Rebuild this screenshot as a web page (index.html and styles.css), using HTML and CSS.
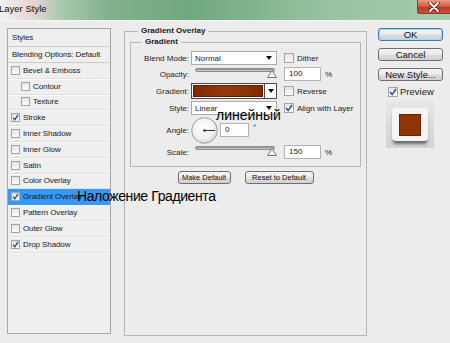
FILE: index.html
```html
<!DOCTYPE html>
<html lang="ru">
<head>
    <meta charset="UTF-8">
    <meta name="viewport" content="width=device-width, initial-scale=1.0">
    <title>Layer Style</title>
    <link rel="stylesheet" href="styles.css">
</head>
<body>
    <div class="window">
        <div class="titlebar">
            <span class="title">Layer Style</span>
            <span class="close">
                <svg width="12" height="10" viewBox="0 0 12 10"><path d="M2 1 L10 9 M10 1 L2 9" stroke="#4a1a12" stroke-width="3.4" stroke-linecap="round"/><path d="M2 1 L10 9 M10 1 L2 9" stroke="#fff" stroke-width="1.8" stroke-linecap="round"/></svg>
            </span>
        </div>

        <div class="content">
            <!-- left list of layer effects -->
            <div class="styles-panel">
                <div class="panel-head">Styles</div>
                <div class="panel-head blend">Blending Options: Default</div>
                <ul class="fx-list">
                    <li><span class="check"></span>Bevel &amp; Emboss</li>
                    <li class="sub"><span class="check"></span>Contour</li>
                    <li class="sub"><span class="check"></span>Texture</li>
                    <li><span class="check"><svg width="7" height="7" viewBox="0 0 7 7"><path d="M1 3.6 L2.8 5.8 L6 0.8" fill="none" stroke="#2b4d9e" stroke-width="1.4"/></svg></span>Stroke</li>
                    <li><span class="check"></span>Inner Shadow</li>
                    <li><span class="check"></span>Inner Glow</li>
                    <li><span class="check"></span>Satin</li>
                    <li><span class="check"></span>Color Overlay</li>
                    <li class="active"><span class="check"><svg width="7" height="7" viewBox="0 0 7 7"><path d="M1 3.6 L2.8 5.8 L6 0.8" fill="none" stroke="#2b4d9e" stroke-width="1.4"/></svg></span>Gradient Overlay</li>
                    <li><span class="check"></span>Pattern Overlay</li>
                    <li><span class="check"></span>Outer Glow</li>
                    <li><span class="check"><svg width="7" height="7" viewBox="0 0 7 7"><path d="M1 3.6 L2.8 5.8 L6 0.8" fill="none" stroke="#2b4d9e" stroke-width="1.4"/></svg></span>Drop Shadow</li>
                </ul>
            </div>

            <!-- main settings -->
            <fieldset class="group outer">
                <legend>Gradient Overlay</legend>
                <fieldset class="group inner">
                    <legend>Gradient</legend>
                    <div class="form-grid">
                        <label>Blend Mode:</label>
                        <div class="select"><span>Normal</span><span class="arrow"></span></div>
                        <div class="extra"><span class="check"></span>Dither</div>

                        <label>Opacity:</label>
                        <div class="slider">
                            <div class="track"></div>
                            <svg class="thumb" width="10" height="8" viewBox="0 0 10 8"><path d="M5 0.5 L9.5 7.5 L0.5 7.5 Z" fill="#f4f4f4" stroke="#7a7a7a"/></svg>
                        </div>
                        <div class="extra"><span class="num">100</span><span class="unit">%</span></div>

                        <label>Gradient:</label>
                        <div class="gradient-pick"><span class="swatch"></span><span class="drop"><span class="arrow"></span></span></div>
                        <div class="extra"><span class="check"></span>Reverse</div>

                        <label>Style:</label>
                        <div class="select"><span>Linear</span><span class="arrow"></span></div>
                        <div class="extra"><span class="check"><svg width="8" height="8" viewBox="0 0 8 8"><path d="M1 4 L3.2 6.6 L7 1" fill="none" stroke="#2b4d9e" stroke-width="1.5"/></svg></span>Align with Layer</div>

                        <label>Angle:</label>
                        <div class="angle">
                            <svg width="27" height="27" viewBox="0 0 27 27">
                                <defs>
                                    <radialGradient id="dial" cx="0.45" cy="0.4" r="0.6">
                                        <stop offset="0" stop-color="#ffffff"/>
                                        <stop offset="0.7" stop-color="#f0f0f0"/>
                                        <stop offset="1" stop-color="#d6d6d6"/>
                                    </radialGradient>
                                </defs>
                                <circle cx="13.5" cy="13.5" r="12.8" fill="url(#dial)" stroke="#9c9c9c"/>
                                <line x1="13.5" y1="13.5" x2="24" y2="13.5" stroke="#333" stroke-width="1"/>
                                <circle cx="13.5" cy="13.5" r="1.3" fill="#333"/>
                            </svg>
                            <span class="num small">0</span><span class="unit deg">°</span>
                        </div>
                        <div class="extra"></div>

                        <label>Scale:</label>
                        <div class="slider">
                            <div class="track"></div>
                            <svg class="thumb" width="10" height="8" viewBox="0 0 10 8"><path d="M5 0.5 L9.5 7.5 L0.5 7.5 Z" fill="#f4f4f4" stroke="#7a7a7a"/></svg>
                        </div>
                        <div class="extra"><span class="num">150</span><span class="unit">%</span></div>
                    </div>
                </fieldset>
                <div class="defaults">
                    <button class="btn small make">Make Default</button>
                    <button class="btn small reset">Reset to Default</button>
                </div>
            </fieldset>

            <!-- dialog buttons -->
            <div class="side">
                <button class="btn big ok">OK</button>
                <button class="btn big">Cancel</button>
                <button class="btn big">New Style...</button>
                <div class="preview-row"><span class="check"><svg width="8" height="8" viewBox="0 0 8 8"><path d="M1 4 L3.2 6.6 L7 1" fill="none" stroke="#2b4d9e" stroke-width="1.5"/></svg></span>Preview</div>
                <div class="preview-thumb">
                    <div class="thumb-card"><div class="thumb-fill"></div></div>
                </div>
            </div>
        </div>

        <span class="note note-gradient">Наложение Градиента</span>
        <span class="note note-linear">линейный</span>
    </div>
</body>
</html>
```

FILE: styles.css
```css
body {
    margin: 0;
    width: 450px;
    height: 343px;
    overflow: hidden;
    background: #ececec;
    font-family: "Liberation Sans", Arial, sans-serif;
    font-size: 8px;
    color: #222;
}

.window {
    position: relative;
    height: 343px;
}

/* title bar */
.titlebar {
    height: 20px;
    display: flex;
    justify-content: space-between;
    align-items: flex-start;
    background: linear-gradient(90deg, #f4f1f1 0, #eadede 22px, #d9d2cb 40px, #a8c9ae 62px, #80b18c 110px, #72a87f 190px, #83b68f 260px, #98c4a1 330px, #a5cbac 450px);
    border-bottom: 1px solid #f6f6f6;
}

.title {
    font-size: 9.5px;
    line-height: 12px;
    margin: 3px 0 0 -1px;
    color: #111;
}

.close {
    width: 32px;
    height: 13px;
    display: flex;
    justify-content: center;
    align-items: center;
    background: linear-gradient(#e79a86, #cf5a40 50%, #b8351f 52%, #c9553c);
    border: 1px solid #8c3a2c;
    border-top: none;
    border-right: none;
    border-radius: 0 0 0 3px;
}

.content {
    display: flex;
    align-items: flex-start;
    padding: 5px 0 0 7px;
}

/* styles list */
.styles-panel {
    width: 102px;
    height: 304px;
    margin-top: 2px;
    border: 1px solid #a7a7a7;
    background: #efefef;
}

.panel-head {
    height: 17px;
    line-height: 17px;
    padding-left: 4px;
    border-bottom: 1px solid #cbcbcb;
    letter-spacing: -0.1px;
}

.panel-head.blend {
    height: 15px;
    line-height: 15px;
}

.fx-list {
    list-style: none;
    margin: 0;
    padding: 0;
}

.fx-list li {
    height: 14.8px;
    display: flex;
    align-items: center;
    padding-left: 3px;
    border-bottom: 1px solid #e2e2e2;
    box-shadow: 0 1px 0 #f9f9f9;
    letter-spacing: -0.1px;
}

.fx-list li.sub {
    padding-left: 13px;
}

.fx-list li.active {
    background: #3599f5;
    color: #1a1a1a;
    border-bottom-color: #3599f5;
}

.check {
    width: 7px;
    height: 7px;
    border: 1px solid #a3a3a3;
    background: linear-gradient(#e4e4e4, #fdfdfd);
    margin-right: 3px;
    display: flex;
    align-items: center;
    justify-content: center;
    flex: none;
}

/* group boxes */
.group {
    margin: 0;
    border: 1px solid #b6b6b6;
    box-sizing: border-box;
}

.group legend {
    font-weight: bold;
    line-height: 10px;
    padding: 0 3px;
}

.outer {
    width: 243px;
    height: 310px;
    margin-left: 13px;
    padding: 1px 5px 0 5px;
}

.outer > legend {
    margin-left: 8px;
}

.inner {
    width: 231px;
    padding: 4px 2px 7px 2px;
}

.inner > legend {
    margin-left: 9px;
}

.form-grid {
    display: grid;
    grid-template-columns: 58px 86px 1fr;
    grid-template-rows: 14px 14px 16px 14px 26px 14px;
    row-gap: 2px;
    align-items: center;
}

.form-grid label {
    text-align: right;
    padding-right: 2px;
}

.extra {
    display: flex;
    align-items: center;
    padding-left: 7px;
}

.extra .check {
    width: 8px;
    height: 8px;
    margin-right: 3px;
}

.select {
    height: 14px;
    box-sizing: border-box;
    border: 1px solid #ababab;
    background: #fff;
    display: flex;
    align-items: center;
    justify-content: space-between;
    padding: 0 4px 0 3px;
}

.arrow {
    width: 0;
    height: 0;
    border-left: 3.5px solid transparent;
    border-right: 3.5px solid transparent;
    border-top: 4px solid #111;
}

.slider {
    height: 14px;
    position: relative;
}

.track {
    height: 4px;
    margin: 1px 2px 0 4px;
    border-radius: 2px;
    background: linear-gradient(#7f7f7f, #b9b9b9 60%, #d8d8d8);
    border: 1px solid #8d8d8d;
    box-sizing: border-box;
}

.thumb {
    position: absolute;
    right: 0;
    top: 3px;
}

.num {
    width: 37px;
    height: 14px;
    box-sizing: border-box;
    border: 1px solid #b2b2b2;
    background: #fff;
    padding-left: 4px;
    line-height: 12px;
}

.num.small {
    width: 29px;
    margin-left: 2px;
}

.unit {
    margin-left: 4px;
}

.unit.deg {
    align-self: flex-start;
    margin-top: 6px;
}

.gradient-pick {
    height: 16px;
    box-sizing: border-box;
    border: 1px solid #4a4a4a;
    display: flex;
    background: #fff;
}

.swatch {
    flex: 1;
    margin: 1px;
    background: linear-gradient(90deg, #7e2b05, #943b0a 45%, #8a3306 80%, #7a2804);
    border: 1px solid #5c1d03;
}

.drop {
    width: 11px;
    border-left: 1px solid #4a4a4a;
    display: flex;
    align-items: center;
    justify-content: center;
}

.angle {
    display: flex;
    align-items: center;
    height: 26px;
}

.angle .num {
    margin-left: 2px;
}

/* buttons */
.btn {
    font-family: "Liberation Sans", Arial, sans-serif;
    color: #111;
    border: 1px solid #6f6f6f;
    border-radius: 3px;
    background: linear-gradient(#f4f4f4, #ececec 48%, #dcdcdc 52%, #d2d2d2);
    padding: 0;
    box-sizing: border-box;
}

.defaults {
    display: flex;
    justify-content: center;
    gap: 14px;
    margin-top: 4px;
}

.btn.small {
    height: 13px;
    font-size: 7.5px;
    line-height: 11px;
}

.btn.make {
    width: 53px;
}

.btn.reset {
    width: 69px;
}

.side {
    width: 65px;
    margin: 2px 0 0 11px;
    display: flex;
    flex-direction: column;
}

.btn.big {
    width: 65px;
    height: 13px;
    font-size: 9.5px;
    line-height: 11px;
    margin-bottom: 7px;
}

.btn.ok {
    border-color: #3b7cad;
    box-shadow: inset 0 0 0 1px #a9d7f4;
}

.preview-row {
    display: flex;
    align-items: center;
    font-size: 9.5px;
    margin: -2px 0 0 10px;
    height: 11px;
}

.preview-row .check {
    width: 8px;
    height: 8px;
    margin-right: 2px;
}

.preview-thumb {
    width: 48px;
    height: 47px;
    margin: 4px 0 0 8px;
    background: linear-gradient(#e6e6e6, #d3d3d3);
    display: flex;
    align-items: center;
    justify-content: center;
}

.thumb-card {
    width: 36px;
    height: 33px;
    border-radius: 4px;
    background: #f5f5f5;
    box-shadow: 0 4px 3px -1px rgba(0, 0, 0, 0.5);
    display: flex;
    align-items: center;
    justify-content: center;
}

.thumb-fill {
    width: 20px;
    height: 20px;
    background: #8e3603;
    border: 1px solid #6a2400;
}

/* annotations drawn over the dialog */
.note {
    position: absolute;
    font-family: "Liberation Sans", Arial, sans-serif;
    font-size: 14px;
    line-height: 16px;
    color: #000;
    white-space: nowrap;
}

.note-gradient {
    left: 77px;
    top: 188px;
    letter-spacing: -0.4px;
}

.note-linear {
    left: 216px;
    top: 107px;
}
```
